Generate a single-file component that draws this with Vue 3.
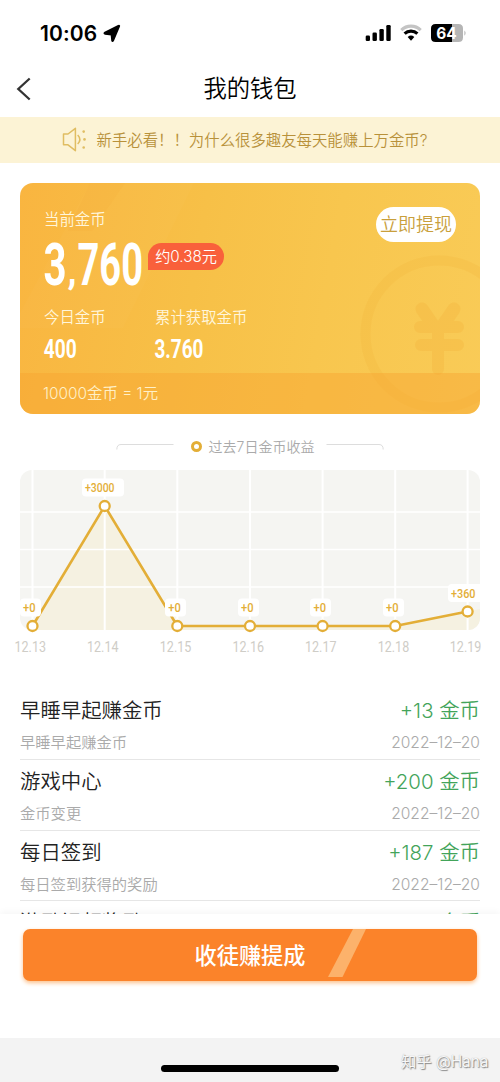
<script setup>
const points = [
  { x: 32.5, y: 156, date: '12.13', dx: 14.5, label: '+0', lx: 23, lw: 12.5, bx: 20, bw: 21 },
  { x: 104.7, y: 36, date: '12.14', dx: 87, label: '+3000', lx: 85, lw: 29.5, bx: 82, bw: 42 },
  { x: 177.3, y: 156, date: '12.15', dx: 159.8, label: '+0', lx: 168.3, lw: 12.5, bx: 165, bw: 21 },
  { x: 250, y: 156, date: '12.16', dx: 232.5, label: '+0', lx: 241, lw: 12.5, bx: 238, bw: 21 },
  { x: 322.6, y: 156, date: '12.17', dx: 305, label: '+0', lx: 313.5, lw: 12.5, bx: 310, bw: 21 },
  { x: 395.2, y: 156, date: '12.18', dx: 377.7, label: '+0', lx: 386, lw: 12.5, bx: 383, bw: 21 },
  { x: 467.6, y: 141.5, date: '12.19', dx: 449.8, label: '+360', lx: 451, lw: 24.5, bx: 448, bw: 37 }
]
const line = points.map((p) => `${p.x},${p.y}`).join(' ')
const area = `${line} 480,139 480,160 32.5,160`

const records = [
  { title: '早睡早起赚金币', note: '早睡早起赚金币', amount: '+13 金币', date: '2022–12–20' },
  { title: '游戏中心', note: '金币变更', amount: '+200 金币', date: '2022–12–20' },
  { title: '每日签到', note: '每日签到获得的奖励', amount: '+187 金币', date: '2022–12–20' },
  { title: '激励视频奖励', note: '', amount: '+8 金币', date: '' }
]
</script>

<template>
  <div class="page">
    <header class="status">
      <div class="clock">
        <span>10:06</span>
        <svg width="18" height="18" viewBox="0 0 18 18"><path d="M16.2 1.2 10.1 15.6Q9.5 16.7 9.1 15.5L8.5 9.5 2 8.8Q.8 8.2 2 7.5L15.4 .9Q16.5 .4 16.2 1.2Z" fill="#000" stroke="#000" stroke-width="1.8" stroke-linejoin="round" /></svg>
      </div>
      <svg class="signals" width="102" height="20" viewBox="0 0 102 20">
        <rect x=".7" y="11.5" width="4.3" height="5.5" rx="1.3" />
        <rect x="7.5" y="8.5" width="4.4" height="8.5" rx="1.3" />
        <rect x="14.4" y="5" width="4.4" height="12" rx="1.3" />
        <rect x="21.3" y="1" width="4.4" height="16" rx="1.3" />
        <path d="M36.3 6.1A13.9 13.9 0 0 1 55.7 6.1" fill="none" stroke="#c4c4c4" stroke-width="3.1" />
        <path d="M39.6 9.7A9.2 9.2 0 0 1 52.4 9.7" fill="none" stroke="#000" stroke-width="3.1" />
        <path d="M42.7 13Q46 10.2 49.3 13L46 16.8Z" />
        <path d="M70.6 0H87V18H70.6Q66 18 66 13.5V4.5Q66 0 70.6 0Z" />
        <path d="M87 0H93.4Q98 0 98 4.5V13.5Q98 18 93.4 18H87Z" fill="#b5b5b5" />
        <path d="M99.4 6.5Q101.8 9 99.4 11.8Z" fill="#b5b5b5" />
        <text x="71.3" y="14.6" textLength="20.5" lengthAdjust="spacingAndGlyphs" class="battery">64</text>
      </svg>
    </header>

    <nav class="nav">
      <svg class="back" width="16" height="24" viewBox="0 0 16 24"><path d="M13.7 1.5 2.3 12 13.7 22.5" fill="none" stroke="#333" stroke-width="2.3" /></svg>
      <h1>我的钱包</h1>
    </nav>

    <div class="notice">
      <svg width="25" height="25" viewBox="0 0 25 25" fill="none" stroke="#e0bd62" stroke-width="1.5" stroke-linejoin="round">
        <path d="M1.5 7H6L13.4 1.3V23.7L6 17.8H1.5Z" />
        <path d="M15.7 8Q20 12.5 15.7 17" />
        <g fill="#e0bd62" stroke="none"><circle cx="21.7" cy="4.6" r="1.3" /><circle cx="22.5" cy="12.4" r="1.3" /><circle cx="21.7" cy="20.5" r="1.3" /></g>
      </svg>
      <span>新手必看！！为什么很多趣友每天能赚上万金币?</span>
    </div>

    <section class="card">
      <svg class="art" width="460" height="231" viewBox="0 0 460 231">
        <path d="M70 0H174L103 145H0V130Z" fill="#fff" opacity=".02" />
        <path d="M70 0H105L72 48H48Z" fill="#f6a72e" opacity=".12" />
        <circle cx="419" cy="151" r="73.5" fill="none" stroke="#f4b23a" stroke-width="10" opacity=".24" />
        <g opacity=".3">
          <g stroke="#f4b23a" stroke-linecap="round" fill="none">
            <path d="M402 126 413 142M434 126 423 142" stroke-width="13" />
            <path d="M400 144H438M401 162H438M418 145V186" stroke-width="12" />
          </g>
        </g>
      </svg>
      <div class="balance">
        <div class="balance-main">
          <div class="label">当前金币</div>
          <div class="coins">
            <svg width="100" height="56" viewBox="0 0 100 56">
              <text class="num big"><tspan x="-.5" y="46.2" textLength="23" lengthAdjust="spacingAndGlyphs">3</tspan><tspan x="23.5" y="45" textLength="9" lengthAdjust="spacingAndGlyphs" class="comma">,</tspan><tspan x="33.5" y="46.2" textLength="65.5" lengthAdjust="spacingAndGlyphs">760</tspan></text>
            </svg>
            <span class="approx">约0.38元</span>
          </div>
        </div>
        <button class="withdraw">立即提现</button>
      </div>
      <div class="stats">
        <div class="today">
          <div class="label">今日金币</div>
          <svg width="34" height="30" viewBox="0 0 34 30"><text x="-.3" y="21.3" textLength="33" lengthAdjust="spacingAndGlyphs" class="num small">400</text></svg>
        </div>
        <div>
          <div class="label">累计获取金币</div>
          <svg width="50" height="30" viewBox="0 0 50 30"><text x="-.5" y="21.3" textLength="49" lengthAdjust="spacingAndGlyphs" class="num small">3.760</text></svg>
        </div>
      </div>
      <div class="rate">10000金币 = 1元</div>
    </section>

    <div class="chart-head">
      <svg width="58" height="8" viewBox="0 0 58 8"><path d="M.8 7.5Q.8 2.5 5 2.5H57.5" fill="none" stroke="#ddd" /></svg>
      <i class="dot"></i>
      <span>过去7日金币收益</span>
      <svg width="58" height="8" viewBox="0 0 58 8"><path d="M.5 2.5H53Q57.2 2.5 57.2 7.5" fill="none" stroke="#ddd" /></svg>
    </div>

    <svg class="chart" width="500" height="190" viewBox="0 0 500 190">
      <defs><clipPath id="plot"><rect x="20" y="0" width="460" height="160" rx="12" /></clipPath></defs>
      <g clip-path="url(#plot)">
        <rect x="20" width="460" height="160" fill="#f5f5f2" />
        <polygon :points="area" fill="#f5f1e1" />
        <path d="M20 42H480M20 79.5H480M20 117H480" stroke="#fff" stroke-width="1.6" />
        <path v-for="p in points" :key="p.date" :d="`M${p.x} 0V160`" stroke="#fff" stroke-width="2" />
      </g>
      <polyline :points="line" fill="none" stroke="#e3ae37" stroke-width="2.6" stroke-linejoin="round" />
      <g v-for="p in points" :key="p.date">
        <rect :x="p.bx" :y="p.y - 27.5" :width="p.bw" height="18" rx="4" fill="#fff" />
        <text :x="p.lx" :y="p.y - 13.7" :textLength="p.lw" lengthAdjust="spacingAndGlyphs" class="value">{{ p.label }}</text>
        <circle :cx="p.x" :cy="p.y" r="5" fill="#fff" stroke="#e3ae37" stroke-width="2.3" />
        <text :x="p.dx" y="182" textLength="31.5" lengthAdjust="spacingAndGlyphs" class="date">{{ p.date }}</text>
      </g>
    </svg>

    <ul class="records">
      <li v-for="(r, i) in records" :key="i">
        <div class="row top"><span>{{ r.title }}</span><span class="amount">{{ r.amount }}</span></div>
        <div class="row sub"><span>{{ r.note }}</span><span class="day">{{ r.date }}</span></div>
      </li>
    </ul>

    <div class="action">
      <button class="invite">
        <svg class="shine" width="38" height="48" viewBox="0 0 38 48"><path d="M25 0H38L14.5 48H0Z" fill="#fcb26b" /></svg>
        <span>收徒赚提成</span>
      </button>
    </div>

    <footer class="home">
      <div class="bar"></div>
      <span class="mark">知乎 @Hana</span>
    </footer>
  </div>
</template>

<style>
body { background: #fff; }
</style>

<style scoped>
* { box-sizing: border-box; }
.page { width: 500px; height: 1082px; overflow: hidden; display: flex; flex-direction: column; background: #fff; font-family: Inter, "Noto Sans CJK SC", sans-serif; font-weight: 350; }
.page > * { flex: none; }
svg { display: block; overflow: visible; }
button { border: 0; padding: 0; font-family: inherit; }
.status { height: 68px; display: flex; justify-content: space-between; padding: 24px 33px 0 40px; }
.clock { display: flex; gap: 6px; height: 20px; line-height: 20px; font-size: 21px; font-weight: 600; letter-spacing: .1px; }
.clock svg { margin-top: 1px; }
.battery { font: 700 15.5px Inter, sans-serif; fill: #fff; }
.nav { height: 49px; display: grid; grid-template-columns: 100px 300px 100px; align-items: center; padding-bottom: 7px; }
.back { margin-left: 16px; margin-top: -1px; }
h1 { margin: 0; font-size: 23.3px; line-height: 34px; font-weight: 350; text-align: center; color: #000; }
.notice { height: 46px; background: #fcf3d5; color: #b8913a; display: flex; align-items: center; padding: 0 0 2px 62px; gap: 9.5px; font-size: 15.4px; white-space: nowrap; font-weight: 350; }
.card { position: relative; margin: 20px 20px 0; height: 231px; border-radius: 13px; overflow: hidden; color: #fff; background: linear-gradient(100deg, #f9b540 0%, #f7c047 38%, #f8c64e 65%, #f9cb57 100%); }
.art { position: absolute; left: 0; top: 0; }
.balance, .stats, .rate { position: relative; }
.balance { height: 123px; padding: 25px 24px 0; display: flex; justify-content: space-between; align-items: flex-start; }
.label { height: 23px; line-height: 23px; font-size: 15.4px; color: #fff6dc; white-space: nowrap; }
.coins { display: flex; gap: 4px; padding-top: 8px; }
.num { fill: #fff; font-family: Roboto, sans-serif; font-weight: 700; }
.big { font-size: 60px; }
.comma { font-size: 38px; }
.small { font-size: 26px; }
.approx { width: 76px; height: 27px; margin-top: 4px; border-radius: 14px 14px 14px 0; background: #f9603b; font-size: 15.2px; line-height: 27px; text-align: center; white-space: nowrap; }
.withdraw { width: 80px; height: 35px; margin-top: -1px; border-radius: 18px; background: #fff; color: #c99f3c; font-size: 18px; font-weight: 350; line-height: 35px; white-space: nowrap; }
.stats { height: 67px; padding: 0 24px; display: flex; }
.today { width: 111px; }
.stats .label { margin-bottom: 8px; }
.rate { height: 41px; padding-left: 23px; line-height: 41px; font-size: 15.4px; color: #fff0c8; background: rgba(247, 161, 48, .42); }
.chart-head { height: 56px; display: flex; justify-content: center; align-items: center; color: #aaa; font-size: 14px; padding-top: 8px; }
.dot { width: 11px; height: 11px; border: 3px solid #e3ae37; border-radius: 50%; margin: 0 7px 0 17px; }
.chart-head span { margin-right: 12px; }
.value { font: 500 13px Roboto, sans-serif; fill: #e3ae37; }
.date { font: 400 15.5px Roboto, sans-serif; fill: #cfcdc7; }
.records { height: 254px; overflow: hidden; margin: 0; padding: 29px 20px 0; list-style: none; }
li { height: 70.8px; border-bottom: 1.4px solid #e6e6e6; padding-top: 1px; }
.row { display: flex; justify-content: space-between; white-space: nowrap; }
.top { height: 41px; line-height: 42px; font-size: 20.4px; color: #222; }
.amount { color: #43a45a; }
.sub { line-height: 24px; font-size: 15.3px; color: #aaa; }
.day { font-size: 15.6px; }
.action { height: 124px; padding: 15px 23px 0; background: #fff; box-shadow: 0 -2px 7px rgba(0, 0, 0, .04); position: relative; }
.invite { position: relative; width: 454px; height: 52px; border-radius: 7px; background: #fb832a; color: #fff; font-size: 22.2px; font-weight: 500; padding-bottom: 2px; box-shadow: 0 2px 4px #fcc08a; }
.shine { position: absolute; left: 305px; top: 0; }
.home { position: relative; height: 44px; background: #f3f3f3; display: flex; justify-content: center; padding-top: 27px; }
.bar { width: 178px; height: 7px; border-radius: 4px; background: #000; }
.mark { position: absolute; left: 401px; top: 12px; font-size: 15.3px; line-height: 24px; color: #f7f7f7; font-weight: 400; text-shadow: 1px 1px 1px #888, 0 0 1px #aaa; white-space: nowrap; }
</style>
